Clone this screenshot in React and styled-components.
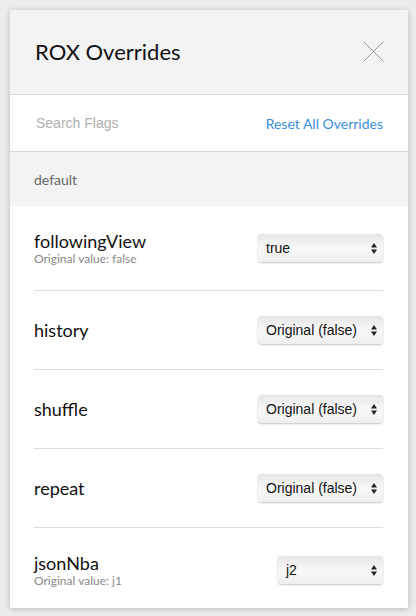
import React from "react";
import styled, { createGlobalStyle } from "styled-components";

const Global = createGlobalStyle`
  html, body { margin: 0; padding: 0; background: #ececec; }
  body { font-family: Lato, "Liberation Sans", sans-serif; }
  * { box-sizing: border-box; }
`;

const Page = styled.div`
  padding: 10px 8px 8px 10px;
  width: 416px;
  height: 616px;
`;

const Card = styled.div`
  width: 398px;
  height: 598px;
  background: #fff;
  box-shadow: 0 1px 6px rgba(0, 0, 0, 0.22);
  overflow: hidden;
  display: flex;
  flex-direction: column;
`;

const Header = styled.div`
  flex: none;
  height: 85px;
  background: #f3f3f3;
  border-bottom: 1px solid #d6d6d6;
  display: flex;
  align-items: center;
  justify-content: space-between;
  padding: 0 24px 1px 25px;
`;

const Title = styled.h1`
  margin: 0;
  font-family: Lato, sans-serif;
  font-weight: 400;
  font-size: 22px;
  color: #111;
`;

const Close = styled.button`
  border: 0;
  background: none;
  padding: 0;
  width: 21px;
  height: 21px;
  display: flex;
  cursor: pointer;
`;

const SearchRow = styled.div`
  flex: none;
  height: 57px;
  border-bottom: 1px solid #d6d6d6;
  display: flex;
  align-items: center;
  justify-content: space-between;
  padding: 0 25px 0 26px;
`;

const Search = styled.input`
  border: 0;
  outline: none;
  font-family: "Liberation Sans", Arial, sans-serif;
  font-size: 14px;
  color: #333;
  background: transparent;
  padding: 0;
  width: 180px;
  &::placeholder { color: #b0b0b0; }
`;

const ResetLink = styled.a`
  font-family: Lato, sans-serif;
  font-size: 14px;
  color: #3a8ed8;
  text-decoration: none;
`;

const Section = styled.div`
  flex: none;
  height: 54px;
  background: #f3f3f3;
  display: flex;
  align-items: center;
  padding: 0 24px;
  font-family: Lato, sans-serif;
  font-size: 14px;
  color: #666;
`;

const List = styled.div`
  padding: 0 25px 0 24px;
  display: flex;
  flex-direction: column;
`;

const Row = styled.div`
  display: flex;
  align-items: center;
  justify-content: space-between;
  padding: 25px 0;
  border-bottom: ${(p) => (p.$last ? "0" : "1px solid #dcdcdc")};
`;

const Info = styled.div`
  display: flex;
  flex-direction: column;
`;

const Name = styled.div`
  font-family: Lato, sans-serif;
  font-size: 18px;
  line-height: 21px;
  color: #111;
`;

const Original = styled.div`
  font-family: Lato, sans-serif;
  font-size: 12px;
  line-height: 13px;
  color: #888;
`;

const SelectBox = styled.div`
  width: ${(p) => p.$w}px;
  height: 28px;
  border-radius: 4px;
  background: linear-gradient(to bottom, #e6e6e6 0%, #f6f6f6 45%, #f8f8f8 60%, #eeeeee 100%);
  box-shadow: 0 1px 2px rgba(0, 0, 0, 0.22), 0 0 1px rgba(0, 0, 0, 0.15);
  display: flex;
  align-items: center;
  justify-content: space-between;
  padding: 0 6px 0 8px;
  font-family: "Liberation Sans", Arial, sans-serif;
  font-size: 14px;
  color: #111;
`;

const Arrows = () => (
  <svg width="6" height="11" viewBox="0 0 6 11">
    <path d="M3 0 L6 4.5 L0 4.5 Z" fill="#222" />
    <path d="M0 6.5 L6 6.5 L3 11 Z" fill="#222" />
  </svg>
);

const flags = [
  { name: "followingView", original: "false", value: "true", w: 125 },
  { name: "history", value: "Original (false)", w: 125 },
  { name: "shuffle", value: "Original (false)", w: 125 },
  { name: "repeat", value: "Original (false)", w: 125 },
  { name: "jsonNba", original: "j1", value: "j2", w: 105 },
];

export default function App() {
  return (
    <>
      <Global />
      <Page>
        <Card>
          <Header>
            <Title>ROX Overrides</Title>
            <Close aria-label="close">
              <svg width="21" height="21" viewBox="0 0 21 21">
                <path d="M0.5 0.5 L20.5 20.5 M20.5 0.5 L0.5 20.5" stroke="#9a9a9a" strokeWidth="1" fill="none" />
              </svg>
            </Close>
          </Header>
          <SearchRow>
            <Search placeholder="Search Flags" />
            <ResetLink href="#">Reset All Overrides</ResetLink>
          </SearchRow>
          <Section>default</Section>
          <List>
            {flags.map((f, i) => (
              <Row key={f.name} $last={i === flags.length - 1}>
                <Info>
                  <Name>{f.name}</Name>
                  {f.original && <Original>Original value: {f.original}</Original>}
                </Info>
                <SelectBox $w={f.w}>
                  <span>{f.value}</span>
                  <Arrows />
                </SelectBox>
              </Row>
            ))}
          </List>
        </Card>
      </Page>
    </>
  );
}
